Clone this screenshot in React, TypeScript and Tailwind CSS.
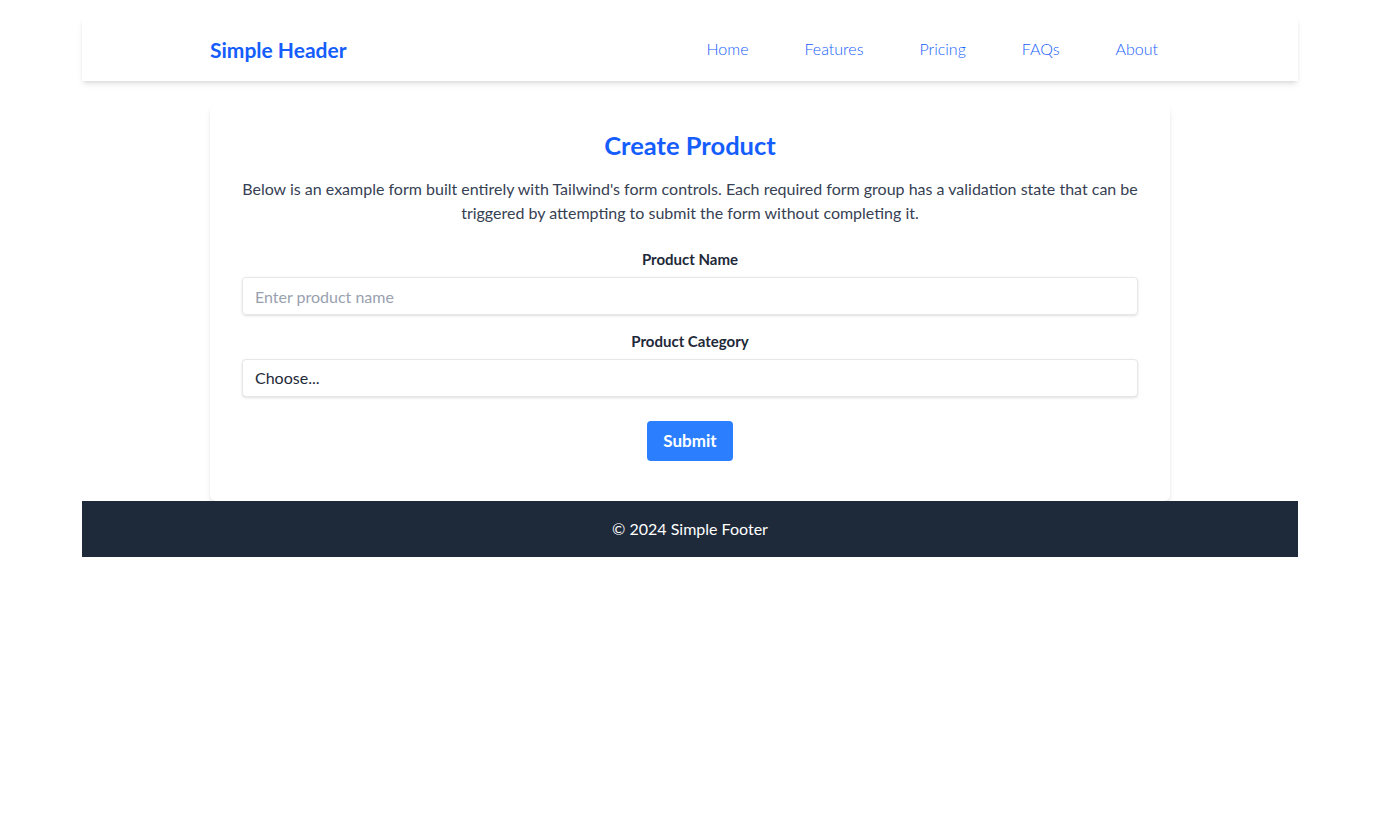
import { useState } from "react";

const links = ["Home", "Features", "Pricing", "FAQs", "About"];

const App = () => {
  const [name, setName] = useState("");
  const [category, setCategory] = useState("");

  return (
    <div className="min-h-screen bg-white font-['Lato','Liberation_Sans',sans-serif]">
      <div className="w-[1216px] ml-[82px] pt-[17px]">
        <header className="bg-white shadow-md h-16">
          <div className="w-[960px] mx-auto h-full flex items-center justify-between">
            <a href="#" className="text-[21px] font-bold text-blue-600 mt-0.5">
              Simple Header
            </a>
            <nav className="flex items-center gap-14 pr-3">
              {links.map((link) => (
                <a key={link} href="#" className="text-blue-600 text-base font-light">
                  {link}
                </a>
              ))}
            </nav>
          </div>
        </header>

        <main className="w-[960px] mx-auto mt-6 bg-white rounded-md shadow-md px-8 pt-6 pb-10">
          <h1 className="text-[25.5px] leading-8 font-bold text-blue-600 text-center">Create Product</h1>
          <p className="mt-4 text-center text-gray-700 leading-6">
            Below is an example form built entirely with Tailwind's form controls. Each required form group has a
            validation state that can be triggered by attempting to submit the form without completing it.
          </p>

          <form className="mt-6" onSubmit={(e) => e.preventDefault()}>
            <div className="mb-4">
              <label className="block text-center text-[15px] leading-5 font-bold text-gray-800 mb-2">Product Name</label>
              <input
                type="text"
                value={name}
                onChange={(e) => setName(e.target.value)}
                placeholder="Enter product name"
                className="w-full h-[38px] px-3 border border-gray-200 rounded shadow text-gray-700 placeholder-gray-400 outline-none"
              />
            </div>
            <div>
              <label className="block text-center text-[15px] leading-5 font-bold text-gray-800 mb-2">Product Category</label>
              <select
                value={category}
                onChange={(e) => setCategory(e.target.value)}
                className="w-full h-[38px] px-3 border border-gray-200 rounded shadow text-gray-800 bg-white outline-none appearance-none"
              >
                <option value="">Choose...</option>
                <option value="electronics">Electronics</option>
                <option value="clothing">Clothing</option>
                <option value="home">Home</option>
              </select>
            </div>
            <div className="mt-6 flex justify-center">
              <button type="submit" className="bg-blue-500 text-white text-[17px] font-bold px-4 h-10 rounded">
                Submit
              </button>
            </div>
          </form>
        </main>

        <footer className="bg-gray-800 h-14 flex items-center justify-center">
          <p className="text-white">© 2024 Simple Footer</p>
        </footer>
      </div>
    </div>
  );
};

export default App;
